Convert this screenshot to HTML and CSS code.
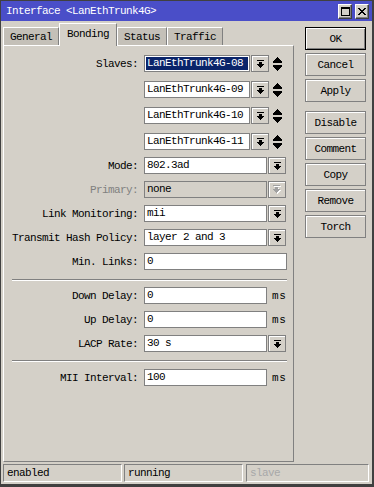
FILE: index.html
```html
<!DOCTYPE html>
<html>
<head>
<meta charset="utf-8">
<link rel="stylesheet" href="styles.css">
</head>
<body>
<div class="window">
  <div class="titlebar">
    <span class="title">Interface &lt;LanEthTrunk4G&gt;</span>
    <div class="tb-buttons">
      <span class="tb-btn"><svg width="9" height="9" viewBox="0 0 9 9" shape-rendering="crispEdges"><path d="M0 0h9v2H0zM0 2h1v7H0zM8 2h1v7H8zM0 8h9v1H0z"/></svg></span>
      <span class="tb-btn"><svg width="8" height="7" viewBox="0 0 8 7" shape-rendering="crispEdges"><path d="M0 0h2v1H0zM6 0h2v1H6zM1 1h2v1H1zM5 1h2v1H5zM2 2h4v1H2zM3 3h2v1H3zM2 4h4v1H2zM1 5h2v1H1zM5 5h2v1H5zM0 6h2v1H0zM6 6h2v1H6z"/></svg></span>
    </div>
  </div>
  <div class="content">
    <div class="left">
      <div class="tabs">
        <span class="tab">General</span>
        <span class="tab active">Bonding</span>
        <span class="tab">Status</span>
        <span class="tab">Traffic</span>
      </div>
      <div class="panel">
        <div class="group">
          <div class="group slaves">
            <div class="row">
              <span class="label">Slaves:</span>
              <div class="combo slave-combo"><span class="field selected">LanEthTrunk4G-08</span><span class="drop"><svg width="7" height="8" viewBox="0 0 7 8" shape-rendering="crispEdges"><path d="M0 0h7v1H0zM2 2h3v2H2zM0 4h7v1H0zM1 5h5v1H1zM2 6h3v1H2zM3 7h1v1H3z"/></svg></span></div>
              <span class="updown"><svg width="9" height="14" viewBox="0 0 9 14" shape-rendering="crispEdges"><path d="M4 0h1v1H4zM3 1h3v1H3zM2 2h5v1H2zM1 3h7v1H1zM0 4h9v2H0zM0 8h9v2H0zM1 10h7v1H1zM2 11h5v1H2zM3 12h3v1H3zM4 13h1v1H4z"/></svg></span>
            </div>
            <div class="row">
              <span class="label"></span>
              <div class="combo slave-combo"><span class="field">LanEthTrunk4G-09</span><span class="drop"><svg width="7" height="8" viewBox="0 0 7 8" shape-rendering="crispEdges"><path d="M0 0h7v1H0zM2 2h3v2H2zM0 4h7v1H0zM1 5h5v1H1zM2 6h3v1H2zM3 7h1v1H3z"/></svg></span></div>
              <span class="updown"><svg width="9" height="14" viewBox="0 0 9 14" shape-rendering="crispEdges"><path d="M4 0h1v1H4zM3 1h3v1H3zM2 2h5v1H2zM1 3h7v1H1zM0 4h9v2H0zM0 8h9v2H0zM1 10h7v1H1zM2 11h5v1H2zM3 12h3v1H3zM4 13h1v1H4z"/></svg></span>
            </div>
            <div class="row">
              <span class="label"></span>
              <div class="combo slave-combo"><span class="field">LanEthTrunk4G-10</span><span class="drop"><svg width="7" height="8" viewBox="0 0 7 8" shape-rendering="crispEdges"><path d="M0 0h7v1H0zM2 2h3v2H2zM0 4h7v1H0zM1 5h5v1H1zM2 6h3v1H2zM3 7h1v1H3z"/></svg></span></div>
              <span class="updown"><svg width="9" height="14" viewBox="0 0 9 14" shape-rendering="crispEdges"><path d="M4 0h1v1H4zM3 1h3v1H3zM2 2h5v1H2zM1 3h7v1H1zM0 4h9v2H0zM0 8h9v2H0zM1 10h7v1H1zM2 11h5v1H2zM3 12h3v1H3zM4 13h1v1H4z"/></svg></span>
            </div>
            <div class="row">
              <span class="label"></span>
              <div class="combo slave-combo"><span class="field">LanEthTrunk4G-11</span><span class="drop"><svg width="7" height="8" viewBox="0 0 7 8" shape-rendering="crispEdges"><path d="M0 0h7v1H0zM2 2h3v2H2zM0 4h7v1H0zM1 5h5v1H1zM2 6h3v1H2zM3 7h1v1H3z"/></svg></span></div>
              <span class="updown"><svg width="9" height="14" viewBox="0 0 9 14" shape-rendering="crispEdges"><path d="M4 0h1v1H4zM3 1h3v1H3zM2 2h5v1H2zM1 3h7v1H1zM0 4h9v2H0zM0 8h9v2H0zM1 10h7v1H1zM2 11h5v1H2zM3 12h3v1H3zM4 13h1v1H4z"/></svg></span>
            </div>
          </div>
          <div class="row">
            <span class="label">Mode:</span>
            <div class="combo"><span class="field">802.3ad</span><span class="drop"><svg width="7" height="8" viewBox="0 0 7 8" shape-rendering="crispEdges"><path d="M0 0h7v1H0zM2 2h3v2H2zM0 4h7v1H0zM1 5h5v1H1zM2 6h3v1H2zM3 7h1v1H3z"/></svg></span></div>
          </div>
          <div class="row">
            <span class="label disabled">Primary:</span>
            <div class="combo"><span class="field off">none</span><span class="drop"><svg width="8" height="9" viewBox="0 0 8 9" shape-rendering="crispEdges"><path fill="#fff" d="M1 1h7v1H1zM3 3h3v2H3zM1 5h7v1H1zM2 6h5v1H2zM3 7h3v1H3zM4 8h1v1H4z"/><path fill="#a0a0a0" d="M0 0h7v1H0zM2 2h3v2H2zM0 4h7v1H0zM1 5h5v1H1zM2 6h3v1H2zM3 7h1v1H3z"/></svg></span></div>
          </div>
          <div class="row">
            <span class="label">Link Monitoring:</span>
            <div class="combo"><span class="field">mii</span><span class="drop"><svg width="7" height="8" viewBox="0 0 7 8" shape-rendering="crispEdges"><path d="M0 0h7v1H0zM2 2h3v2H2zM0 4h7v1H0zM1 5h5v1H1zM2 6h3v1H2zM3 7h1v1H3z"/></svg></span></div>
          </div>
          <div class="row">
            <span class="label">Transmit Hash Policy:</span>
            <div class="combo"><span class="field">layer 2 and 3</span><span class="drop"><svg width="7" height="8" viewBox="0 0 7 8" shape-rendering="crispEdges"><path d="M0 0h7v1H0zM2 2h3v2H2zM0 4h7v1H0zM1 5h5v1H1zM2 6h3v1H2zM3 7h1v1H3z"/></svg></span></div>
          </div>
          <div class="row">
            <span class="label">Min. Links:</span>
            <span class="field full">0</span>
          </div>
        </div>
        <div class="sep sep1"></div>
        <div class="group">
          <div class="row">
            <span class="label">Down Delay:</span>
            <span class="field short">0</span><span class="unit">ms</span>
          </div>
          <div class="row">
            <span class="label">Up Delay:</span>
            <span class="field short">0</span><span class="unit">ms</span>
          </div>
          <div class="row">
            <span class="label">LACP Rate:</span>
            <div class="combo"><span class="field">30 s</span><span class="drop"><svg width="7" height="8" viewBox="0 0 7 8" shape-rendering="crispEdges"><path d="M0 0h7v1H0zM2 2h3v2H2zM0 4h7v1H0zM1 5h5v1H1zM2 6h3v1H2zM3 7h1v1H3z"/></svg></span></div>
          </div>
        </div>
        <div class="sep sep2"></div>
        <div class="row">
          <span class="label">MII Interval:</span>
          <span class="field short">100</span><span class="unit">ms</span>
        </div>
      </div>
    </div>
    <div class="buttons">
      <div class="btn-group">
        <span class="btn default">OK</span>
        <span class="btn">Cancel</span>
        <span class="btn">Apply</span>
      </div>
      <div class="btn-group">
        <span class="btn">Disable</span>
        <span class="btn">Comment</span>
        <span class="btn">Copy</span>
        <span class="btn">Remove</span>
        <span class="btn">Torch</span>
      </div>
    </div>
  </div>
  <div class="statusbar">
    <span class="cell c1">enabled</span>
    <span class="cell c2">running</span>
    <span class="cell c3 dim">slave</span>
  </div>
</div>
</body>
</html>
```

FILE: styles.css
```css
* { box-sizing: border-box; }
html, body { margin: 0; padding: 0; }
body {
  font-family: "Liberation Mono", "DejaVu Sans Mono", monospace;
  font-size: 11px;
  letter-spacing: -0.6px;
  color: #000;
  background: #d4d0c8;
}
.window {
  width: 374px;
  height: 487px;
  border-style: solid;
  border-width: 1px 2px 3px 1px;
  border-color: #404040;
  background: #d4d0c8;
  display: flex;
  flex-direction: column;
}
.titlebar {
  height: 20px;
  flex: none;
  background: #4a4ec8;
  color: #fff;
  display: flex;
  align-items: center;
  justify-content: space-between;
  padding: 0 3px 0 5px;
}
.title { line-height: 14px; padding-bottom: 1px; }
.tb-buttons { display: flex; gap: 3px; }
.tb-btn {
  width: 14px;
  height: 15px;
  background: #d4d0c8;
  border: 1px solid;
  border-color: #fff #404040 #404040 #fff;
  box-shadow: inset -1px -1px #808080;
  display: flex;
  align-items: center;
  justify-content: center;
}
.tb-btn svg { fill: #000; display: block; }

.content {
  flex: 1;
  display: flex;
  gap: 11px;
  padding: 2px 0 0 2px;
}
.left {
  width: 291px;
  display: flex;
  flex-direction: column;
}
.tabs {
  height: 22px;
  display: flex;
  align-items: flex-end;
}
.tab {
  height: 18px;
  padding: 0 6px;
  background: #c4c0b8;
  border: 1px solid;
  border-color: #fff #808080 transparent #fff;
  border-bottom: none;
  display: flex;
  align-items: center;
}
.tab.active {
  height: 23px;
  margin-bottom: -1px;
  padding: 0 7px 2px;
  background: #d4d0c8;
  position: relative;
  z-index: 1;
}
.panel {
  flex: 1;
  border: 1px solid;
  border-color: #fff #808080 #808080 #fff;
  padding-top: 9px;
}
.group { display: flex; flex-direction: column; gap: 7px; }
.group.slaves { gap: 9px; }
.row {
  display: flex;
  align-items: center;
  height: 17px;
}
.label {
  width: 134px;
  margin-right: 6px;
  text-align: right;
  white-space: nowrap;
  flex: none;
}
.label.disabled { color: #808080; }
.field {
  height: 17px;
  border: 1px solid #808080;
  background: #fff;
  padding: 0 2px;
  line-height: 15px;
  white-space: nowrap;
  overflow: hidden;
}
.field.selected {
  background: #0a246a;
  color: #fff;
  box-shadow: inset 0 0 0 1px #fff;
}
.field.off { background: #d4d0c8; }
.field.full { width: 143px; }
.field.short { width: 123px; }
.unit { margin-left: 5px; letter-spacing: 0.6px; }
.combo {
  display: flex;
  width: 142px;
  height: 17px;
}
.combo .field { flex: 1; }
.combo.slave-combo { width: 125px; }
.drop {
  width: 18px;
  height: 17px;
  margin-left: 1px;
  border: 1px solid #808080;
  background: #d4d0c8;
  box-shadow: inset 1px 1px #fff;
  display: flex;
  align-items: center;
  justify-content: center;
}
.drop svg { fill: #000; display: block; }
.updown { margin-left: 4px; display: flex; }
.updown svg { fill: #000; display: block; }
.sep {
  border-top: 1px solid #808080;
  border-bottom: 1px solid #fff;
  margin-left: 8px;
  margin-right: 6px;
}
.sep1 { margin-top: 9px; margin-bottom: 6px; }
.sep2 { margin-top: 8px; margin-bottom: 7px; }

.buttons {
  width: 61px;
  margin-top: 4px;
  display: flex;
  flex-direction: column;
  gap: 9px;
}
.btn-group { display: flex; flex-direction: column; gap: 3px; }
.btn {
  height: 23px;
  border: 1px solid #808080;
  box-shadow: inset 1px 1px #fff;
  background: #d4d0c8;
  display: flex;
  align-items: center;
  justify-content: center;
}
.btn.default {
  border-color: #000;
  box-shadow: inset 1px 1px #fff, inset -1px -1px #808080;
}
.statusbar {
  height: 22px;
  flex: none;
  display: flex;
  gap: 2px;
  padding: 2px 3px 2px 2px;
}
.cell {
  height: 18px;
  border: 1px solid;
  border-color: #808080 #fff #fff #808080;
  padding: 0 3px;
  line-height: 16px;
}
.c1 { width: 119px; }
.c2 { width: 119px; }
.c3 { flex: 1; margin-left: 1px; }
.dim { color: #a8a8a8; }
```
